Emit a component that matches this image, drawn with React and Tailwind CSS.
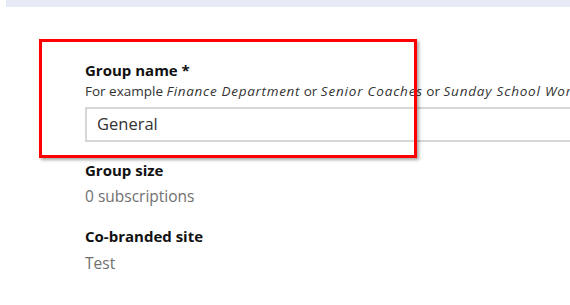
export default function App() {
  return (
    <div className="relative h-[305px] w-[570px] overflow-hidden bg-white font-['Open_Sans',sans-serif]">
      <div className="ml-[6px] h-[7px] bg-[#e6eaf6]" />

      <div className="pl-[85px] pt-[52px]">
        <div className="text-[15px] font-bold leading-[22px] text-[#111]">Group name *</div>
        <div className="whitespace-nowrap text-[13.5px] leading-[20px] text-[#333]">
          For example <em className="tracking-[0.7px]">Finance Department</em> or{" "}
          <em className="tracking-[0.8px]">Senior Coaches</em> or{" "}
          <em className="tracking-[0.8px]">Sunday School Workers</em>
        </div>
        <div className="mt-[6px] flex h-[35px] w-[520px] items-center border-2 border-[#d6d6d6] px-[10px] text-[16.5px] text-[#333]">
          General
        </div>

        <div className="mt-[17px] text-[15px] font-bold leading-[22px] text-[#111]">Group size</div>
        <div className="mt-[4px] text-[15.5px] leading-[22px] text-[#707070]">0 subscriptions</div>

        <div className="mt-[18px] text-[15px] font-bold leading-[22px] text-[#111]">Co-branded site</div>
        <div className="mt-[5px] text-[15.5px] leading-[22px] text-[#707070]">Test</div>
      </div>

      <div className="absolute left-[39px] top-[39px] h-[119px] w-[378px] border-[3px] border-[#f00] shadow-[2px_2px_3px_rgba(0,0,0,0.35)]" />
    </div>
  );
}
